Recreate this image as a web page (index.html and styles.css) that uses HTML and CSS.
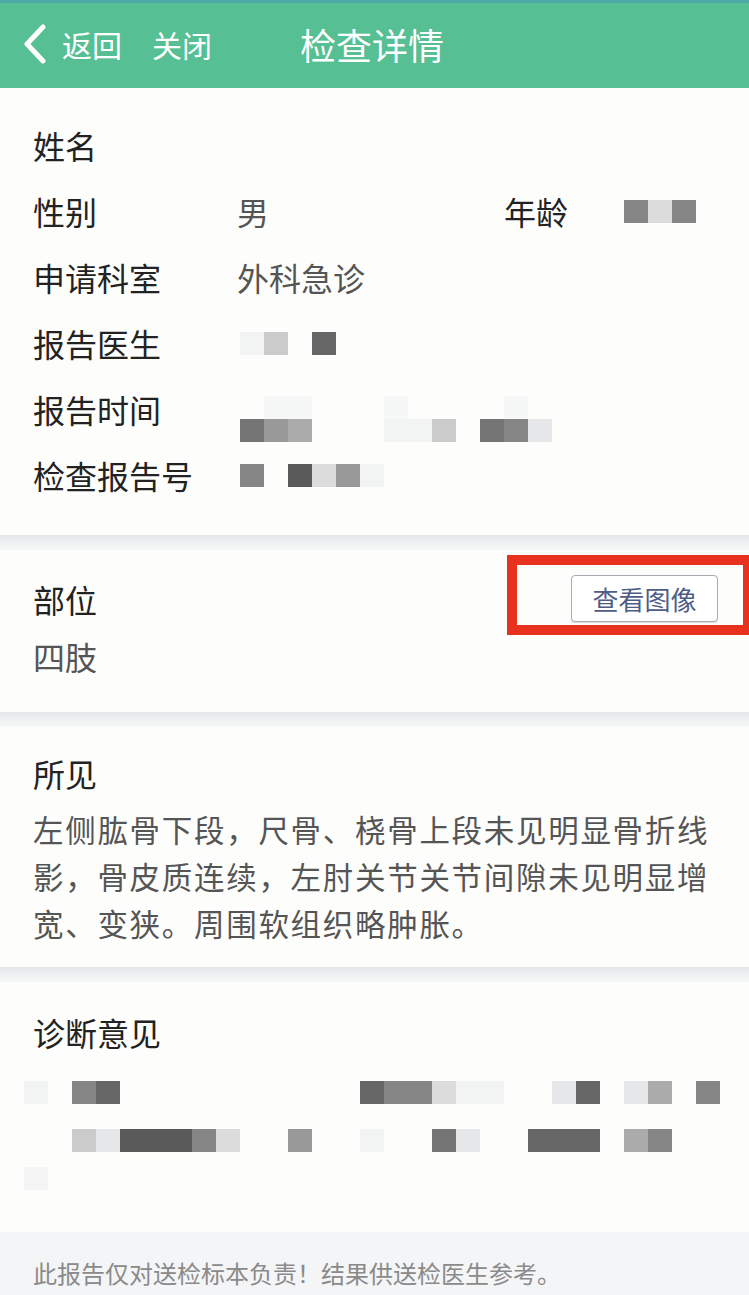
FILE: index.html
```html
<!DOCTYPE html>
<html lang="zh">
<head>
<meta charset="utf-8">
<link rel="stylesheet" href="styles.css">
</head>
<body>
<header class="topbar">
  <svg class="chev" width="26" height="40" viewBox="0 0 26 40"><path d="M21 3 L5 20 L21 37" fill="none" stroke="#fff" stroke-width="5" stroke-linecap="round" stroke-linejoin="round"/></svg>
  <span class="nav">返回</span>
  <span class="nav close">关闭</span>
  <span class="title">检查详情</span>
</header>

<section class="card info">
  <div class="row"><span class="lbl">姓名</span></div>
  <div class="row"><span class="lbl">性别</span><span class="val sex">男</span><span class="lbl age">年龄</span>
    <span class="mosaic"><i class="k4"></i><i class="k8"></i><i class="k4"></i></span></div>
  <div class="row"><span class="lbl">申请科室</span><span class="val">外科急诊</span></div>
  <div class="row"><span class="lbl">报告医生</span>
    <span class="mosaic"><i class="k10"></i><i class="k7"></i><i></i><i class="k2"></i></span></div>
  <div class="row"><span class="lbl">报告时间</span>
    <span class="mosaic stack">
      <span class="mrow faint"><i></i><i class="k10"></i><i class="k10"></i><i></i><i></i><i></i><i class="k10"></i><i></i><i></i><i></i><i></i><i class="k10"></i></span>
      <span class="mrow"><i class="k3"></i><i class="k5"></i><i class="k6"></i><i></i><i></i><i></i><i class="k10"></i><i class="k10"></i><i class="k7"></i><i></i><i class="k3"></i><i class="k4"></i><i class="k9"></i></span>
    </span></div>
  <div class="row"><span class="lbl">检查报告号</span>
    <span class="mosaic"><i class="k4"></i><i></i><i class="k1"></i><i class="k8"></i><i class="k5"></i><i class="k10"></i></span></div>
</section>

<div class="sep"></div>

<section class="card part">
  <div class="part-left">
    <div class="row"><span class="lbl">部位</span></div>
    <div class="row"><span class="val">四肢</span></div>
  </div>
  <button class="view-btn">查看图像</button>
  <div class="redbox"></div>
</section>

<div class="sep"></div>

<section class="card seen">
  <div class="head">所见</div>
  <p class="desc">左侧肱骨下段，尺骨、桡骨上段未见明显骨折线影，骨皮质连续，左肘关节关节间隙未见明显增宽、变狭。周围软组织略肿胀。</p>
</section>

<div class="sep"></div>

<section class="card diag">
  <div class="head">诊断意见</div>
  <div class="diag-body">
    <span class="mrow line1"><i class="k10"></i><i></i><i class="k4"></i><i class="k2"></i><i></i><i></i><i></i><i></i><i></i><i></i><i></i><i></i><i></i><i></i><i class="k2"></i><i class="k4"></i><i class="k4"></i><i class="k8"></i><i class="k10"></i><i class="k10"></i><i></i><i></i><i class="k9"></i><i class="k2"></i><i></i><i class="k9"></i><i class="k6"></i><i></i><i class="k4"></i></span>
    <span class="mrow line2"><i></i><i></i><i class="k7"></i><i class="k9"></i><i class="k1"></i><i class="k1"></i><i class="k1"></i><i class="k4"></i><i class="k8"></i><i></i><i></i><i class="k5"></i><i></i><i></i><i class="k10"></i><i></i><i></i><i class="k3"></i><i class="k9"></i><i></i><i></i><i class="k2"></i><i class="k2"></i><i class="k2"></i><i></i><i class="k6"></i><i class="k4"></i></span>
    <span class="mrow line3"><i class="k10"></i></span>
  </div>
</section>

<footer class="foot">此报告仅对送检标本负责！结果供送检医生参考。</footer>
</body>
</html>
```

FILE: styles.css
```css
* { box-sizing: border-box; }
html, body { margin: 0; padding: 0; }
body {
  width: 749px;
  height: 1295px;
  overflow: hidden;
  background: #fcfdfc;
  font-family: "Noto Sans CJK SC", "Noto Sans", sans-serif;
  color: #222;
}

.topbar {
  height: 88px;
  background: #56bf93;
  border-top: 3px solid #4aa9a4;
  display: flex;
  align-items: center;
  padding-left: 22px;
  padding-bottom: 3px;
  color: #fff;
}
.chev { margin-right: 14px; }
.nav { font-size: 30px; line-height: 40px; }
.close { margin-left: 30px; }
.title { font-size: 36px; line-height: 40px; margin-left: 88px; }

.card { background: #fdfdfc; padding-left: 33px; }

.info { padding-top: 24px; padding-bottom: 27px; }
.row { display: flex; align-items: center; height: 66px; font-size: 32px; }
.lbl { width: 204px; flex: none; color: #222; }
.val { color: #555; }
.sex { width: 267px; flex: none; }
.age { width: 117px; }

.mosaic { display: flex; margin-left: 3px; height: 23px; }
.mosaic.stack { flex-direction: column; height: 46px; margin-top: 20px; }
.mrow { display: flex; height: 23px; }
.mosaic i, .mrow i { display: block; width: 24px; height: 23px; flex: none; }
.mrow.faint i { opacity: 0.6; }

.k1 { background: #595959; }
.k2 { background: #676767; }
.k3 { background: #757575; }
.k4 { background: #858585; }
.k5 { background: #999; }
.k6 { background: #ababab; }
.k7 { background: #cbcbcb; }
.k8 { background: #dcdcdc; }
.k9 { background: #e6e7e9; }
.k10 { background: #f2f3f3; }

.sep {
  height: 15px;
  background: linear-gradient(#e4e6e8, #f1f2f3 60%, #f6f7f7);
}

.part {
  position: relative;
  display: flex;
  padding-top: 20px;
  padding-bottom: 28px;
  height: 162px;
}
.part .row { height: 57px; }
.part-left { flex: 1; }
.view-btn {
  position: absolute;
  left: 571px;
  top: 25px;
  width: 147px;
  height: 47px;
  background: #fff;
  border: 1px solid #a9adb3;
  border-radius: 4px;
  color: #4e5d86;
  font-family: "Noto Sans CJK SC", sans-serif;
  font-size: 26px;
  padding: 0;
  box-shadow: 0 1px 1px rgba(0,0,0,0.15);
}
.redbox {
  position: absolute;
  left: 507px;
  top: 5px;
  width: 246px;
  height: 80px;
  border: 10px solid #e9321d;
}

.seen { padding-top: 22px; padding-bottom: 25px; height: 240px; }
.head { font-size: 32px; line-height: 48px; color: #222; }
.desc {
  margin: 9px 0 0;
  padding-right: 20px;
  font-size: 30.5px;
  line-height: 47px;
  color: #555;
  letter-spacing: 1.7px;
}

.diag { padding-top: 26px; height: 250px; padding-left: 33px; }
.diag-body { margin-left: -9px; margin-top: 25px; display: flex; flex-direction: column; }
.line2 { margin-top: 25px; }
.line3 { margin-top: 15px; opacity: 0.8; }

.foot {
  height: 65px;
  background: #f4f5f7;
  padding-left: 33px;
  padding-top: 26px;
  font-size: 24px;
  line-height: 30px;
  color: #8a8a8a;
}
```
